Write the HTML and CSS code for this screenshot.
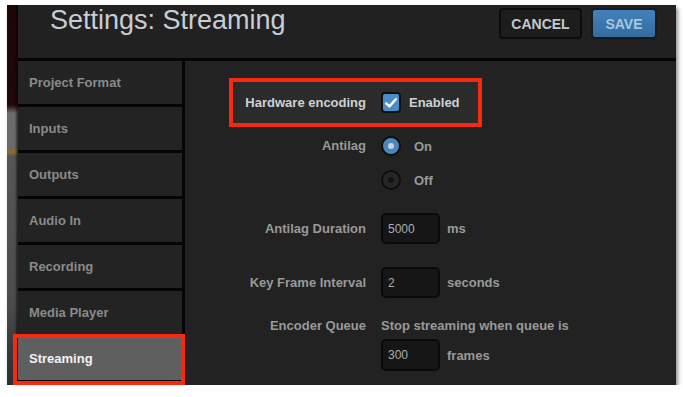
FILE: index.html
```html
<!DOCTYPE html>
<html lang="en">
<head>
    <meta charset="UTF-8">
    <meta name="viewport" content="width=device-width, initial-scale=1.0">
    <title>Settings: Streaming</title>
    <link rel="stylesheet" href="styles.css">
</head>
<body>
    <div class="shot">
        <div class="backdrop"></div>

        <div class="dialog">
            <header class="dialog-header">
                <h1 class="title">Settings: Streaming</h1>
                <div class="actions">
                    <button class="btn btn-cancel">CANCEL</button>
                    <button class="btn btn-save">SAVE</button>
                </div>
            </header>

            <div class="dialog-body">
                <!-- Settings sections -->
                <nav class="sidebar">
                    <a class="nav-item">Project Format</a>
                    <a class="nav-item">Inputs</a>
                    <a class="nav-item">Outputs</a>
                    <a class="nav-item">Audio In</a>
                    <a class="nav-item">Recording</a>
                    <a class="nav-item">Media Player</a>
                    <a class="nav-item active">Streaming</a>
                </nav>

                <main class="content">
                    <div class="field field-hw">
                        <span class="field-label">Hardware encoding</span>
                        <label class="choice">
                            <span class="checkbox">
                                <svg width="16" height="16" viewBox="0 0 16 16">
                                    <path d="M3.2 8.4 L6.4 11.4 L12.8 4.2" fill="none" stroke="#ffffff" stroke-width="2.4" stroke-linecap="round" stroke-linejoin="round"/>
                                </svg>
                            </span>
                            Enabled
                        </label>
                    </div>

                    <div class="field field-antilag">
                        <span class="field-label label-top">Antilag</span>
                        <div class="options">
                            <label class="choice option"><span class="radio on"></span>On</label>
                            <label class="choice option"><span class="radio"></span>Off</label>
                        </div>
                    </div>

                    <div class="field field-duration">
                        <span class="field-label">Antilag Duration</span>
                        <div class="input-row">
                            <input class="num" type="text" value="5000">
                            <span class="unit">ms</span>
                        </div>
                    </div>

                    <div class="field field-keyframe">
                        <span class="field-label">Key Frame Interval</span>
                        <div class="input-row">
                            <input class="num" type="text" value="2">
                            <span class="unit">seconds</span>
                        </div>
                    </div>

                    <div class="field field-queue">
                        <span class="field-label label-line">Encoder Queue</span>
                        <div class="queue">
                            <span class="hint">Stop streaming when queue is</span>
                            <div class="input-row">
                                <input class="num" type="text" value="300">
                                <span class="unit">frames</span>
                            </div>
                        </div>
                    </div>
                </main>
            </div>
        </div>
    </div>
</body>
</html>
```

FILE: styles.css
```css
body {
    margin: 0;
    background-color: #ffffff;
    font-family: "Liberation Sans", Arial, sans-serif;
}

/* The framed screenshot */
.shot {
    display: flex;
    width: 669px;
    height: 380px;
    margin: 5px 0 0 7px;
    box-shadow: 2px 3px 4px rgba(0, 0, 0, 0.45);
}

/* Video showing behind the dialog */
.backdrop {
    width: 11px;
    flex-shrink: 0;
    background: linear-gradient(to bottom,
        #1c0606 0px, #220808 100px,
        #6c6c6c 108px, #6a6a6a 144px,
        #9a6a20 146px, #8a6a30 148px,
        #565656 151px, #4c4c4c 300px,
        #3a3a3a 340px, #2e2e2e 380px);
    box-shadow: inset -2px 0 2px rgba(0, 0, 0, 0.5);
}

.dialog {
    flex: 1;
    display: flex;
    flex-direction: column;
    background-color: #222222;
}

.dialog-header {
    display: flex;
    justify-content: space-between;
    align-items: flex-start;
    height: 53px;
    padding: 0 19px 0 32px;
    background-color: #212121;
    border-bottom: 3px solid #050505;
}

.title {
    margin: 0;
    padding-top: 2px;
    font-size: 27px;
    line-height: 27px;
    font-weight: normal;
    color: #c6cdd4;
}

.actions {
    display: flex;
    gap: 9px;
    margin-top: 3px;
}

.btn {
    height: 31px;
    border: 2px solid #0c0c0c;
    border-radius: 4px;
    font-family: "Liberation Sans", Arial, sans-serif;
    font-size: 14px;
    font-weight: bold;
    cursor: pointer;
}

.btn-cancel {
    width: 83px;
    background-color: #1d1d1d;
    color: #c2c9d0;
}

.btn-save {
    width: 66px;
    background: linear-gradient(#4282bb, #336b9f);
    border-color: #141a20;
    color: #a9c7e2;
}

.dialog-body {
    flex: 1;
    display: flex;
}

/* Left menu */
.sidebar {
    display: flex;
    flex-direction: column;
    gap: 3px;
    width: 164px;
    background-color: #050505;
    border-right: 3px solid #050505;
}

.nav-item {
    position: relative;
    display: flex;
    align-items: center;
    height: 43px;
    padding-left: 11px;
    background-color: #232323;
    color: #8a8a8a;
    font-size: 13px;
    font-weight: bold;
}

.nav-item.active {
    background-color: #5f5f5f;
    color: #f2f2f2;
}

/* Red annotation box */
.nav-item.active::after {
    content: "";
    position: absolute;
    top: -3px;
    left: -5px;
    right: -3px;
    bottom: -5px;
    border: 4px solid #f52a10;
}

/* Form */
.content {
    flex: 1;
    padding-top: 17px;
    color: #999999;
    font-size: 13px;
    font-weight: bold;
}

.field {
    display: grid;
    grid-template-columns: 181px auto;
    column-gap: 15px;
    align-items: center;
}

.field-label {
    text-align: right;
}

.label-top {
    align-self: start;
    line-height: 34px;
}

.label-line {
    align-self: start;
    line-height: 18px;
}

.field-hw {
    grid-template-columns: 133px auto;
    box-sizing: border-box;
    width: 253px;
    height: 49px;
    margin-left: 44px;
    border: 4px solid #f52a10;
    background-color: #2b2b2b;
    color: #cdd1d5;
}

.field-antilag {
    margin-top: 2px;
}

.field-duration {
    margin-top: 16px;
}

.field-keyframe {
    margin-top: 23px;
}

.field-queue {
    margin-top: 19px;
}

.choice {
    display: flex;
    align-items: center;
    gap: 8px;
}

.option {
    height: 34px;
    gap: 13px;
}

.checkbox {
    display: flex;
    align-items: center;
    justify-content: center;
    box-sizing: border-box;
    width: 20px;
    height: 21px;
    border: 2px solid #101010;
    border-radius: 4px;
    background-color: #4c8cc4;
}

.radio {
    display: flex;
    align-items: center;
    justify-content: center;
    box-sizing: border-box;
    width: 20px;
    height: 20px;
    border: 2px solid #0e0e0e;
    border-radius: 50%;
    background-color: #262626;
}

.radio::after {
    content: "";
    width: 6px;
    height: 6px;
    border-radius: 50%;
    background-color: #141414;
}

.radio.on {
    background-color: #4a87bd;
}

.radio.on::after {
    background-color: #c9d0d6;
}

.input-row {
    display: flex;
    align-items: center;
    gap: 7px;
}

.num {
    box-sizing: border-box;
    width: 59px;
    height: 31px;
    padding: 0 5px;
    border: 2px solid #0a0a0a;
    border-radius: 5px;
    background-color: #161616;
    color: #a6acb2;
    font-family: "Liberation Sans", Arial, sans-serif;
    font-size: 12px;
}

.queue {
    display: flex;
    flex-direction: column;
    gap: 4px;
}

.hint {
    line-height: 18px;
}

.queue .num {
    height: 32px;
}
```
